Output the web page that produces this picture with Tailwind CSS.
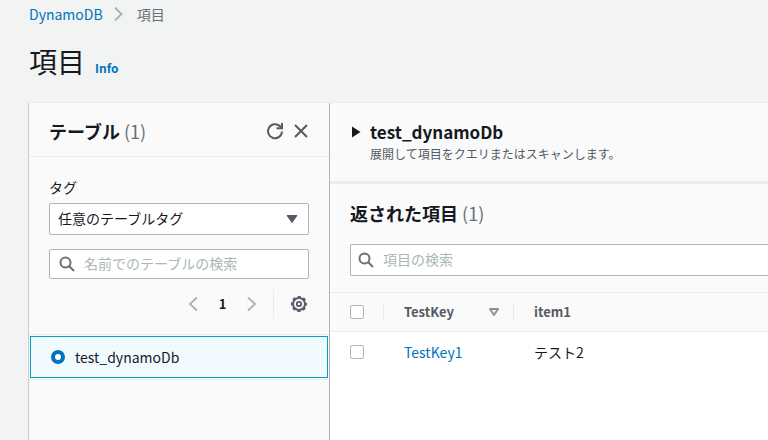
<!DOCTYPE html>
<html lang="ja">
<head>
<meta charset="utf-8">
<meta name="viewport" content="width=device-width, initial-scale=1">
<title>DynamoDB 項目</title>
<script src="https://cdn.jsdelivr.net/npm/@tailwindcss/browser@4"></script>
</head>
<body class="flex min-h-screen flex-col overflow-x-hidden bg-[#f2f3f3] pl-7 font-['Noto_Sans_CJK_JP',sans-serif] text-sm leading-5 text-[#16191f]">
  <nav aria-label="パンくずリスト" class="flex h-5 items-center pl-px mt-1">
    <a href="#" class="text-[#0073bb]">DynamoDB</a>
    <svg class="ml-2.5 h-4 w-3" viewBox="0 0 12 16" fill="none" stroke="#aab7b8" stroke-width="2" aria-hidden="true"><path d="M2 1.5 8.5 8 2 14.5"/></svg>
    <span class="ml-3 text-[#687078]">項目</span>
  </nav>
  <header class="mt-5 flex h-9 items-baseline pl-px">
    <h1 class="text-[28px] leading-[34px]">項目</h1>
    <a href="#" class="ml-2.5 text-xs font-bold text-[#0073bb]">Info</a>
  </header>

  <div class="mt-[22px] flex grow border-t border-[#eaeded] bg-[#fafafa]">
    <aside class="flex w-[302px] shrink-0 flex-col border-x border-l-[#c9cfcf] border-r-[#aab7b8]">
      <div class="flex h-[54px] items-center border-b border-[#eaeded] pt-[3px] pr-5 pl-5">
        <h2 class="grow text-lg leading-6 font-bold">テーブル <span class="font-normal text-[#687078]">(1)</span></h2>
        <button type="button" aria-label="更新">
          <svg class="size-[18px]" viewBox="0 0 18 18" fill="none" stroke="#545b64" stroke-width="2" aria-hidden="true"><path d="M16 9.5a7 7 0 1 1-2.2-5.4L16 6"/><path d="M16 1v5.3h-5.5"/></svg>
        </button>
        <button type="button" aria-label="閉じる" class="ml-[9px]">
          <svg class="size-4" viewBox="0 0 16 16" fill="none" stroke="#545b64" stroke-width="2" aria-hidden="true"><path d="m2 2 12 12M14 2 2 14"/></svg>
        </button>
      </div>

      <div class="flex flex-col px-5 pt-5">
        <label for="tag">タグ</label>
        <div class="relative mt-1.5">
          <select id="tag" class="block h-8 w-full appearance-none rounded-xs border border-[#aab7b8] bg-white px-2 pb-0.5">
            <option>任意のテーブルタグ</option>
          </select>
          <svg class="pointer-events-none absolute top-3 right-[11px] h-2 w-3" viewBox="0 0 12 8" fill="#545b64" stroke="#545b64" stroke-linejoin="round" aria-hidden="true"><path d="M1 .5h10L6 7.5z"/></svg>
        </div>
        <div class="relative mt-3.5">
          <svg class="pointer-events-none absolute top-[7px] left-2.5 size-4" viewBox="0 0 16 16" fill="none" stroke="#687078" stroke-width="2" aria-hidden="true"><circle cx="6.5" cy="6.5" r="5"/><path d="m10 10 5 5"/></svg>
          <input type="text" aria-label="名前でのテーブルの検索" placeholder="名前でのテーブルの検索" class="block h-[30px] w-full rounded-xs border border-[#aab7b8] bg-white pb-0.5 pl-[34px] placeholder:text-[#aab7b8]">
        </div>
        <div class="mt-[9px] flex h-8 items-center justify-end pr-px">
          <button type="button" aria-label="前のページ"><svg class="h-4 w-3" viewBox="0 0 12 16" fill="none" stroke="#aab7b8" stroke-width="2" aria-hidden="true"><path d="M10 1.5 3 8l7 6.5"/></svg></button>
          <button type="button" class="w-[47px] text-center text-[13px] font-bold">1</button>
          <button type="button" aria-label="次のページ"><svg class="h-4 w-3" viewBox="0 0 12 16" fill="none" stroke="#aab7b8" stroke-width="2" aria-hidden="true"><path d="m2 1.5 7 6.5-7 6.5"/></svg></button>
          <span class="mr-4 ml-[15px] h-[30px] w-px bg-[#eaeded]"></span>
          <button type="button" aria-label="設定">
            <svg class="size-[18px]" viewBox="0 0 18 18" fill="none" stroke="#545b64" aria-hidden="true"><circle cx="9" cy="9" r="6" stroke-width="2"/><circle cx="9" cy="9" r="7.3" stroke-width="1.6" stroke-dasharray="3 2.733" stroke-dashoffset="1.5"/><circle cx="9" cy="9" r="2.2" stroke-width="1.8"/></svg>
          </button>
        </div>
      </div>

      <div class="mt-3.5 border-y border-[#eaeded] p-px">
        <label class="flex h-[42px] items-center border border-[#00a1c9] bg-[#f1faff] pl-5">
          <input type="radio" name="table" checked class="size-3.5 appearance-none rounded-full border-4 border-[#0073bb] bg-white">
          <span class="ml-2.5">test_dynamoDb</span>
        </label>
      </div>
    </aside>

    <main class="flex min-w-0 grow flex-col">
      <section class="border-b-3 border-[#eaeded] px-5 pt-4 pb-[18px]">
        <button type="button" aria-expanded="false" class="flex items-start text-left">
          <svg class="mt-[7px] h-3 w-5" viewBox="0 0 20 12" fill="#16191f" aria-hidden="true"><path d="M2 .5v11L10.5 6z"/></svg>
          <span class="block">
            <span class="block text-[17px] leading-[26px] font-bold">test_dynamoDb</span>
            <span class="block text-xs leading-[18px] text-[#545b64]">展開して項目をクエリまたはスキャンします。</span>
          </span>
        </button>
      </section>
      <div class="pt-[17px] pb-4 pl-5">
        <h2 class="text-lg leading-6 font-bold">返された項目 <span class="font-normal text-[#687078]">(1)</span></h2>
        <div class="relative mt-[19px]">
          <svg class="pointer-events-none absolute top-2 left-2 size-4" viewBox="0 0 16 16" fill="none" stroke="#687078" stroke-width="2" aria-hidden="true"><circle cx="6.5" cy="6.5" r="5"/><path d="m10 10 5 5"/></svg>
          <input type="text" aria-label="項目の検索" placeholder="項目の検索" class="block h-8 w-full rounded-l-xs border border-r-0 border-[#aab7b8] bg-white pb-0.5 pl-8 placeholder:text-[#aab7b8]">
        </div>
      </div>
      <div class="grow bg-white">
        <table class="w-full table-fixed text-left">
          <thead class="border-y border-[#eaeded] bg-[#fafafa] text-[13px] text-[#545b64]">
            <tr class="h-[39px]">
              <th class="w-[54px] p-0">
                <div class="flex h-[18px] items-center border-r border-[#eaeded] pl-5"><input type="checkbox" aria-label="すべて選択" class="size-3.5 appearance-none rounded-xs border border-[#aab7b8] bg-white"></div>
              </th>
              <th class="w-[130px] p-0">
                <div class="flex h-[18px] items-center justify-between border-r border-[#eaeded] pr-3.5 pl-5">TestKey
                  <button type="button" aria-label="並べ替え"><svg class="h-2.5 w-2.5" viewBox="0 0 10 10" fill="none" stroke="#879596" stroke-width="2" stroke-linejoin="round" aria-hidden="true"><path d="M1 2h8L5 8z"/></svg></button>
                </div>
              </th>
              <th class="p-0 pl-5">item1</th>
            </tr>
          </thead>
          <tbody>
            <tr class="h-10">
              <td class="p-0 pl-5"><input type="checkbox" aria-label="TestKey1を選択" class="block size-3.5 appearance-none rounded-xs border border-[#aab7b8] bg-white"></td>
              <td class="p-0 pl-5"><a href="#" class="text-[#0073bb]">TestKey1</a></td>
              <td class="p-0 pl-5">テスト2</td>
            </tr>
          </tbody>
        </table>
      </div>
    </main>
  </div>
</body>
</html>
